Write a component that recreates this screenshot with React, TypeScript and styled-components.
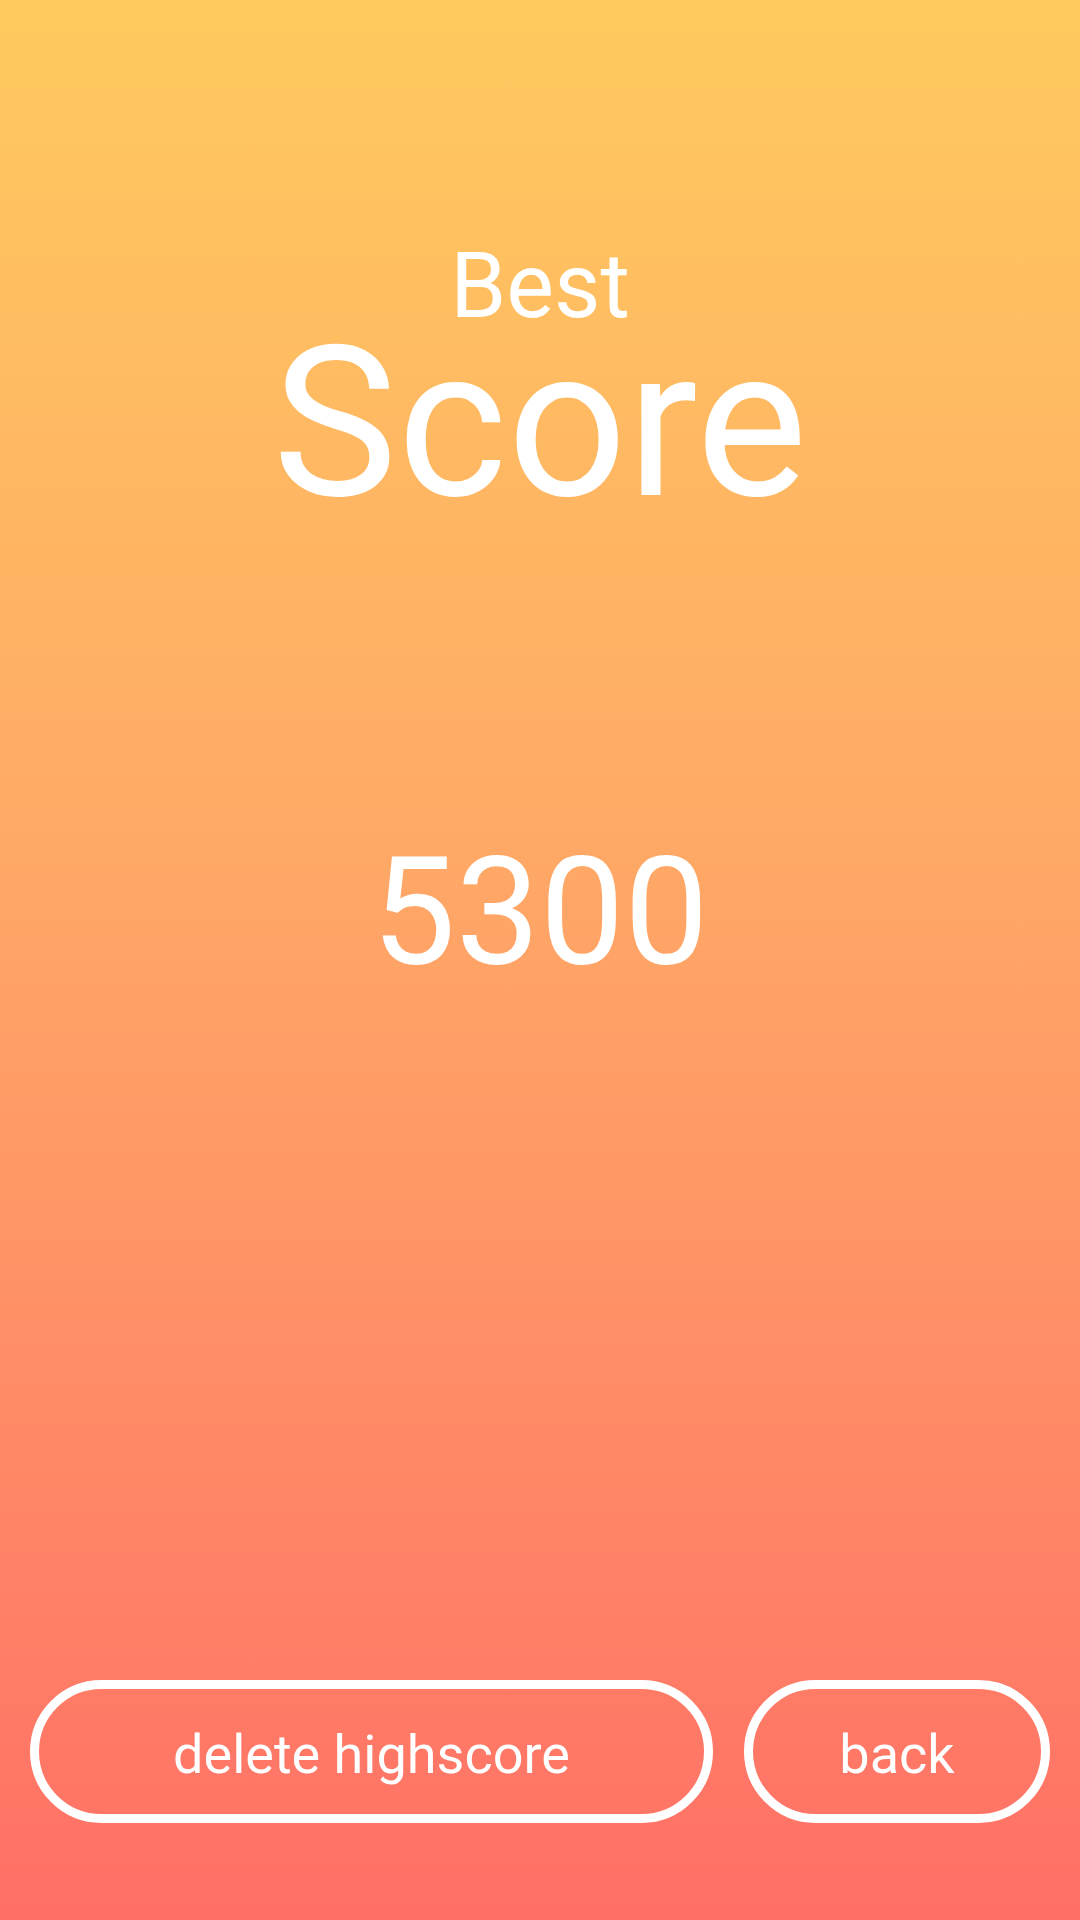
import React from "react";
import styled, { createGlobalStyle } from "styled-components";

const GlobalStyle = createGlobalStyle`
  html, body {
    margin: 0;
    padding: 0;
  }
  body {
    font-family: Roboto, "Liberation Sans", sans-serif;
  }
  * { box-sizing: border-box; }
`;

const Screen = styled.div`
  width: 1080px;
  height: 1920px;
  display: flex;
  flex-direction: column;
  align-items: center;
  background: linear-gradient(180deg, #ffca5e 0%, #ffa866 45%, #ff6f66 100%);
  color: #ffffff;
  font-family: Roboto, "Liberation Sans", sans-serif;
  overflow: hidden;
`;

const Title = styled.div`
  padding-top: 249px;
  display: flex;
  flex-direction: column;
  align-items: center;
`;

const Kicker = styled.div`
  font-size: 90px;
  line-height: 76px;
  font-weight: 400;
  margin-bottom: 8px;
`;

const Heading = styled.div`
  font-size: 210px;
  line-height: 180px;
  font-weight: 400;
`;

const ScoreValue = styled.div`
  margin-top: 325px;
  font-size: 150px;
  line-height: 150px;
  font-weight: 400;
`;

const Spacer = styled.div`
  flex: 1;
`;

const ButtonRow = styled.div`
  width: 100%;
  padding: 0 30px;
  margin-bottom: 97px;
  display: flex;
  gap: 31px;
`;

const PillButton = styled.button<{ $wide?: boolean }>`
  height: 143px;
  ${(p) => (p.$wide ? "flex: 1;" : "width: 306px;")}
  border: 9px solid #ffffff;
  border-radius: 72px;
  background: transparent;
  color: #ffffff;
  font-family: Roboto, "Liberation Sans", sans-serif;
  font-size: 54px;
  font-weight: 400;
  display: flex;
  align-items: center;
  justify-content: center;
  padding: 6px 0 0;
  cursor: pointer;
`;

export default function App() {
  return (
    <>
      <GlobalStyle />
      <Screen>
        <Title>
          <Kicker>Best</Kicker>
          <Heading>Score</Heading>
        </Title>
        <ScoreValue>5300</ScoreValue>
        <Spacer />
        <ButtonRow>
          <PillButton $wide>delete highscore</PillButton>
          <PillButton>back</PillButton>
        </ButtonRow>
      </Screen>
    </>
  );
}
